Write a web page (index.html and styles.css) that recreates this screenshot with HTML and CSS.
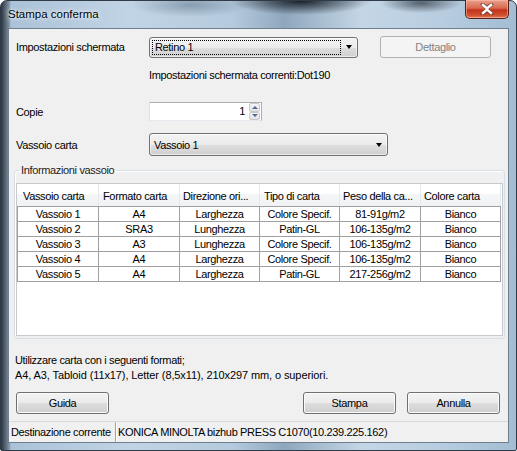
FILE: index.html
```html
<!DOCTYPE html>
<html>
<head>
<meta charset="utf-8">
<link rel="stylesheet" href="styles.css">
</head>
<body>
<div class="window">
  <div class="titlebar">
    <span class="title">Stampa conferma</span>
    <div class="close">
      <svg width="16" height="12" viewBox="0 0 16 12">
        <path d="M3.5 1.5 L8 5 L12.5 1.5 M3.5 10.5 L8 7 L12.5 10.5" stroke="#3b2a2a" stroke-width="4" fill="none" stroke-linecap="round" opacity="0.55"/>
        <path d="M4 2 L8 5.4 L12 2 M4 10 L8 6.6 L12 10" stroke="#ffffff" stroke-width="2.4" fill="none" stroke-linecap="square"/>
      </svg>
    </div>
  </div>
  <div class="client">
    <div class="row r1">
      <span class="label">Impostazioni schermata</span>
      <div class="combo combo-a"><span class="focus">Retino 1</span><span class="arrow"></span></div>
      <div class="btn btn-disabled">Dettaglio</div>
    </div>
    <div class="row r2"><span class="current">Impostazioni schermata correnti:Dot190</span></div>
    <div class="row r3">
      <span class="label">Copie</span>
      <div class="spin">
        <div class="spin-input">1</div>
        <div class="spin-btns">
          <div class="sb sb-up"><span class="tri-up"></span></div>
          <div class="sb sb-down"><span class="tri-down"></span></div>
        </div>
      </div>
    </div>
    <div class="row r4">
      <span class="label">Vassoio carta</span>
      <div class="combo combo-b"><span class="val">Vassoio 1</span><span class="arrow"></span></div>
    </div>
    <fieldset class="group">
      <legend>Informazioni vassoio</legend>
      <div class="listview">
        <table class="grid">
          <thead>
            <tr><th class="k1">Vassoio carta</th><th class="k2">Formato carta</th><th class="k3">Direzione ori...</th><th class="k4">Tipo di carta</th><th class="k5">Peso della ca...</th><th class="k6">Colore carta</th></tr>
          </thead>
          <tbody>
            <tr><td>Vassoio 1</td><td>A4</td><td>Larghezza</td><td>Colore Specif.</td><td>81-91g/m2</td><td>Bianco</td></tr>
            <tr><td>Vassoio 2</td><td>SRA3</td><td>Lunghezza</td><td>Patin-GL</td><td>106-135g/m2</td><td>Bianco</td></tr>
            <tr><td>Vassoio 3</td><td>A3</td><td>Lunghezza</td><td>Colore Specif.</td><td>106-135g/m2</td><td>Bianco</td></tr>
            <tr><td>Vassoio 4</td><td>A4</td><td>Larghezza</td><td>Colore Specif.</td><td>106-135g/m2</td><td>Bianco</td></tr>
            <tr><td>Vassoio 5</td><td>A4</td><td>Larghezza</td><td>Patin-GL</td><td>217-256g/m2</td><td>Bianco</td></tr>
          </tbody>
        </table>
      </div>
    </fieldset>
    <div class="note">
      <div>Utilizzare carta con i seguenti formati;</div>
      <div class="wide">A4, A3, Tabloid (11x17), Letter (8,5x11), 210x297 mm, o superiori.</div>
    </div>
    <div class="buttons">
      <div class="btn btn-guida">Guida</div>
      <div class="btn btn-stampa">Stampa</div>
      <div class="btn btn-annulla">Annulla</div>
    </div>
    <div class="statusbar">
      <div class="panel p1">Destinazione corrente</div>
      <div class="panel p2">KONICA MINOLTA bizhub PRESS C1070(10.239.225.162)</div>
    </div>
  </div>
</div>
</body>
</html>
```
FILE: styles.css
```css
html, body {
  margin: 0;
  padding: 0;
}
body {
  width: 517px;
  height: 451px;
  overflow: hidden;
  background: #ffffff;
  font-family: "Liberation Sans", Arial, sans-serif;
  font-size: 11px;
  letter-spacing: -0.35px;
  color: #000;
}
.window {
  box-sizing: border-box;
  width: 517px;
  height: 451px;
  border: 1px solid #2f3b47;
  border-radius: 7px 7px 2px 2px;
  padding: 0 7px 7px 7px;
  display: flex;
  flex-direction: column;
  background:
    radial-gradient(ellipse 70px 14px at 300px 0px, rgba(18, 24, 32, 0.95), rgba(18, 24, 32, 0) 100%),
    radial-gradient(ellipse 40px 10px at 420px 2px, rgba(40, 48, 58, 0.7), rgba(40, 48, 58, 0) 100%),
    radial-gradient(ellipse 60px 12px at 190px 4px, rgba(90, 110, 130, 0.5), rgba(90, 110, 130, 0) 100%),
    linear-gradient(90deg, rgba(20,28,36,0.85) 0px, rgba(60,70,80,0.4) 8px, rgba(0,0,0,0) 10px, rgba(0,0,0,0) 100%),
    linear-gradient(90deg, rgba(10,18,26,0.0) 0%, rgba(0,0,0,0) 100%),
    linear-gradient(90deg, #a9c0d6 0%, #c1d4e5 25%, #b5cadd 45%, #8fa7bd 55%, #c4d6e6 70%, #b8cde0 85%, #a3bdd3 100%);
}
.titlebar {
  height: 27px;
  display: flex;
  align-items: flex-start;
  flex: none;
}
.title {
  font-size: 11.5px;
  letter-spacing: 0;
  line-height: 27px;
  color: #000;
  text-shadow: 0 0 6px rgba(255,255,255,0.9), 0 0 3px rgba(255,255,255,0.9);
}
.close {
  margin-left: auto;
  margin-top: -1px;
  width: 44px;
  height: 19px;
  box-sizing: border-box;
  border: 1px solid #5a1f18;
  border-top: none;
  border-radius: 0 0 5px 5px;
  background: linear-gradient(180deg, #eba08c 0%, #d86a50 45%, #c4331a 55%, #d0502f 85%, #e2805e 100%);
  box-shadow: inset 0 0 0 1px rgba(255, 200, 180, 0.5);
  display: flex;
  align-items: center;
  justify-content: center;
}
.close svg {
  display: block;
}
.client {
  box-sizing: border-box;
  width: 501px;
  flex: 1;
  border: 1px solid #6f7f8f;
  background: #f0f0f0;
  display: flex;
  flex-direction: column;
}
.row {
  display: flex;
  align-items: center;
  flex: none;
}
.label {
  width: 133px;
  margin-left: 7px;
  flex: none;
}
.r1 {
  margin-top: 7px;
  height: 22px;
}
.r2 {
  margin-top: 10px;
  height: 14px;
  padding-left: 140px;
}
.r3 {
  margin-top: 20px;
  height: 19px;
}
.r4 {
  margin-top: 12px;
  height: 23px;
}
.combo {
  box-sizing: border-box;
  border: 1px solid #707070;
  border-radius: 3px;
  background: linear-gradient(180deg, #f3f3f3 0%, #ebebeb 50%, #dedede 51%, #d0d0d0 100%);
  box-shadow: inset 0 0 0 1px rgba(255,255,255,0.6);
  display: flex;
  align-items: center;
}
.combo-a {
  width: 209px;
  height: 21px;
}
.combo-b {
  width: 239px;
  height: 23px;
}
.focus {
  box-sizing: border-box;
  margin-left: 2px;
  width: 189px;
  height: 15px;
  line-height: 13px;
  padding-left: 2px;
  border: 1px dotted #000;
}
.val {
  margin-left: 4px;
}
.arrow {
  margin-left: auto;
  margin-right: 5px;
  width: 0;
  height: 0;
  border-left: 3.5px solid transparent;
  border-right: 3.5px solid transparent;
  border-top: 4px solid #000;
}
.btn {
  box-sizing: border-box;
  height: 22px;
  border: 1px solid #707070;
  border-radius: 3px;
  background: linear-gradient(180deg, #f3f3f3 0%, #ebebeb 50%, #dddddd 51%, #cfcfcf 100%);
  box-shadow: inset 0 0 0 1px #fbfbfb;
  display: flex;
  align-items: center;
  justify-content: center;
  flex: none;
}
.btn-disabled {
  margin-left: 22px;
  width: 111px;
  border-color: #adb2b5;
  background: #f4f4f4;
  box-shadow: none;
  color: #838383;
}
.current {
  line-height: 14px;
}
.spin {
  display: flex;
  height: 19px;
}
.spin-input {
  box-sizing: border-box;
  width: 100px;
  height: 19px;
  background: #fff;
  border: 1px solid #abadb3;
  border-left-color: #e2e3ea;
  border-bottom-color: #e3e9ef;
  border-right: none;
  text-align: right;
  padding-right: 4px;
  line-height: 17px;
}
.spin-btns {
  box-sizing: border-box;
  width: 13px;
  height: 19px;
  background: #fff;
  border: 1px solid #abadb3;
  border-left: none;
  border-bottom-color: #e3e9ef;
  padding: 0 1px 0 0;
  display: flex;
  flex-direction: column;
}
.sb {
  box-sizing: border-box;
  flex: 1;
  border: 1px solid #c9c9c9;
  border-radius: 2px;
  background: linear-gradient(180deg, #f4f4f4, #e3e3e3);
  display: flex;
  align-items: center;
  justify-content: center;
}
.tri-up {
  width: 0;
  height: 0;
  border-left: 3px solid transparent;
  border-right: 3px solid transparent;
  border-bottom: 3px solid #4f6a94;
}
.tri-down {
  width: 0;
  height: 0;
  border-left: 3px solid transparent;
  border-right: 3px solid transparent;
  border-top: 3px solid #4f6a94;
}
.group {
  box-sizing: border-box;
  margin: 8px 0 0 5px;
  width: 491px;
  padding: 6px 2px 2px 1px;
  border: 1px solid #d5dfe5;
  border-radius: 3px;
  box-shadow: inset 1px 1px 0 #fff;
  flex: none;
  min-width: 0;
}
.group legend {
  margin-left: 3px;
  padding: 0 2px;
  line-height: 13px;
  color: #222;
}
.listview {
  box-sizing: border-box;
  width: 487px;
  height: 153px;
  background: #fff;
  border: 1px solid #c6cacf;
}
.grid {
  border-collapse: separate;
  border-spacing: 0;
  table-layout: fixed;
  width: 484px;
}
.grid th {
  box-sizing: border-box;
  height: 22px;
  padding: 2px 0 0 4px;
  text-align: left;
  font-weight: normal;
  white-space: nowrap;
  overflow: hidden;
  background: linear-gradient(180deg, #ffffff 0%, #ffffff 45%, #f5f6f8 46%, #f1f2f4 100%);
  border-right: 1px solid #e3e8ee;
}
.grid th.k1 { width: 82px; padding-left: 6px; }
.grid th.k2 { width: 81px; padding-left: 4px; }
.grid th.k3 { width: 80px; padding-left: 3px; }
.grid th.k4 { width: 80px; padding-left: 4px; }
.grid th.k5 { width: 81px; padding-left: 3px; }
.grid th.k6 { width: 80px; padding-left: 3px; }
.grid td {
  box-sizing: border-box;
  padding: 0;
  height: 15px;
  line-height: 14px;
  text-align: center;
  white-space: nowrap;
  border-right: 1px solid #a0a0a0;
  border-bottom: 1px solid #a0a0a0;
}
.grid tbody tr:first-child td {
  border-top: 1px solid #a0a0a0;
  height: 16px;
}
.grid td:first-child {
  border-left: 1px solid #a0a0a0;
}
.note {
  margin: 14px 0 0 6px;
  line-height: 15px;
  flex: none;
}
.wide {
  letter-spacing: -0.1px;
}
.buttons {
  margin-top: 9px;
  display: flex;
  flex: none;
}
.btn-guida {
  margin-left: 7px;
  width: 93px;
}
.btn-stampa {
  margin-left: auto;
  width: 93px;
}
.btn-annulla {
  margin-left: 11px;
  margin-right: 8px;
  width: 93px;
}
.statusbar {
  margin-top: auto;
  height: 21px;
  box-sizing: border-box;
  border-top: 1px solid #d9d9d9;
  display: flex;
  align-items: stretch;
  flex: none;
  background: #f0f0f0;
}
.panel {
  display: flex;
  align-items: center;
  white-space: nowrap;
}
.p1 {
  width: 104px;
  padding-left: 2px;
  border-right: 1px solid #a0a0a0;
  box-shadow: 1px 0 0 #fff;
}
.p2 {
  padding-left: 2px;
}
```
